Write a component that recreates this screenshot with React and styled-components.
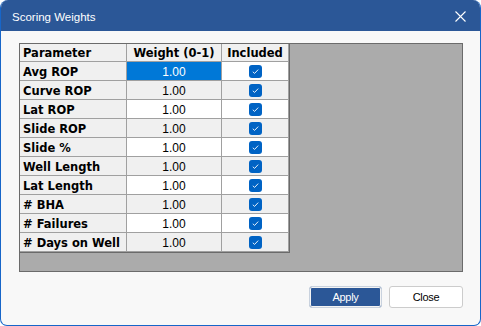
import React from "react";
import styled, { createGlobalStyle } from "styled-components";

const Global = createGlobalStyle`
  html, body { margin: 0; padding: 0; background: #ffffff; }
  * { box-sizing: border-box; }
`;

const Window = styled.div`
  width: 481px;
  height: 326px;
  border: 1px solid #1766c9;
  border-top: none;
  border-radius: 8px 8px 7px 7px;
  overflow: hidden;
  background: #f8f8f8;
  display: flex;
  flex-direction: column;
  font-family: "Liberation Sans", Arial, sans-serif;
`;

const TitleBar = styled.div`
  height: 31px;
  background: #2b5797;
  display: flex;
  align-items: center;
  justify-content: space-between;
  padding: 2px 14px 0 11px;
  color: #ffffff;
  font-size: 11.5px;
`;

const Body = styled.div`
  flex: 1;
  display: flex;
  flex-direction: column;
  padding: 12px 17px 0 18px;
`;

const GridPanel = styled.div`
  width: 444px;
  height: 229px;
  border: 1px solid #6b6b6b;
  background: #ababab;
  display: flex;
  align-items: flex-start;
`;

const Table = styled.div`
  display: grid;
  grid-template-columns: 107px 95px 67px;
  border-right: 1px solid #6a6a6a;
  border-bottom: 1px solid #6a6a6a;
`;

const Cell = styled.div`
  height: ${(p) => (p.$head ? 18 : 19)}px;
  border-right: 1px solid #a0a0a0;
  border-bottom: 1px solid #a0a0a0;
  background: ${(p) => (p.$selected ? "#0078d7" : p.$gray ? "#f0f0f0" : "#ffffff")};
  color: ${(p) => (p.$selected ? "#ffffff" : "#000000")};
  display: flex;
  align-items: center;
  justify-content: ${(p) => (p.$left ? "flex-start" : "center")};
  padding-left: ${(p) => (p.$left ? "3px" : "0")};
  padding-top: 1px;
  font-family: ${(p) =>
    p.$bold ? '"DejaVu Sans", Verdana, sans-serif' : '"Liberation Sans", Arial, sans-serif'};
  font-weight: ${(p) => (p.$bold ? 700 : 400)};
  font-size: ${(p) => (p.$bold ? "11.5px" : "12px")};
  white-space: nowrap;
`;

const Check = styled.span`
  width: 13px;
  height: 13px;
  border-radius: 3px;
  background: #0063c4;
  display: flex;
  align-items: center;
  justify-content: center;
`;

const Footer = styled.div`
  display: flex;
  justify-content: flex-end;
  gap: 7px;
  margin-top: 14px;
`;

const Button = styled.button`
  width: ${(p) => (p.$primary ? 73 : 74)}px;
  height: 22px;
  border-radius: 3px;
  border: 1px solid ${(p) => (p.$primary ? "#c9d2de" : "#cccccc")};
  background: ${(p) => (p.$primary ? "#2b5797" : "#ffffff")};
  box-shadow: ${(p) => (p.$primary ? "inset 0 0 0 1px #f4f4f4" : "none")};
  color: ${(p) => (p.$primary ? "#ffffff" : "#000000")};
  font-family: "Liberation Sans", Arial, sans-serif;
  font-size: 11px;
  letter-spacing: -0.3px;
  padding: 0;
`;

const rows = [
  "Avg ROP",
  "Curve ROP",
  "Lat ROP",
  "Slide ROP",
  "Slide %",
  "Well Length",
  "Lat Length",
  "# BHA",
  "# Failures",
  "# Days on Well",
];

function CloseIcon() {
  return (
    <svg width="11" height="11" viewBox="0 0 11 11">
      <path d="M0.5 0.5 L10.5 10.5 M10.5 0.5 L0.5 10.5" stroke="#ffffff" strokeWidth="1.1" />
    </svg>
  );
}

function CheckMark() {
  return (
    <svg width="9" height="9" viewBox="0 0 9 9">
      <path d="M1.8 4.8 L3.6 6.4 L7.2 2.6" stroke="#ffffff" strokeWidth="0.9" fill="none" />
    </svg>
  );
}

export default function App() {
  return (
    <>
      <Global />
      <Window>
        <TitleBar>
          <span>Scoring Weights</span>
          <CloseIcon />
        </TitleBar>
        <Body>
          <GridPanel>
            <Table>
              <Cell $head $gray $bold $left>Parameter</Cell>
              <Cell $head $gray $bold>Weight (0-1)</Cell>
              <Cell $head $gray $bold>Included</Cell>
              {rows.map((r, i) => (
                <React.Fragment key={r}>
                  <Cell $gray $bold $left>{r}</Cell>
                  <Cell $gray={i % 2 === 1} $selected={i === 0}>1.00</Cell>
                  <Cell $gray={i % 2 === 1}>
                    <Check><CheckMark /></Check>
                  </Cell>
                </React.Fragment>
              ))}
            </Table>
          </GridPanel>
          <Footer>
            <Button $primary>Apply</Button>
            <Button>Close</Button>
          </Footer>
        </Body>
      </Window>
    </>
  );
}
